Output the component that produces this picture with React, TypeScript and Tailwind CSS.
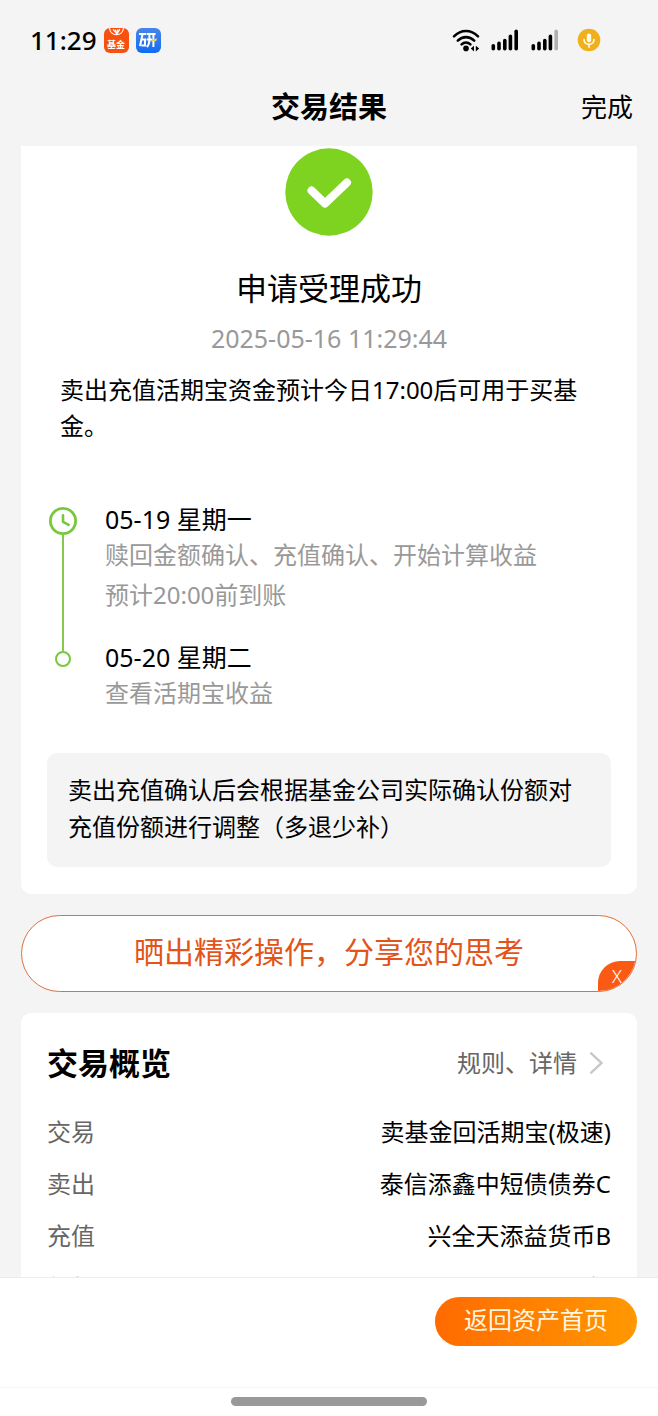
const steps = [
  {
    date: "05-19 星期一",
    lines: ["赎回金额确认、充值确认、开始计算收益", "预计20:00前到账"],
  },
  {
    date: "05-20 星期二",
    lines: ["查看活期宝收益"],
  },
];

const overview = [
  { label: "交易", value: "卖基金回活期宝(极速)" },
  { label: "卖出", value: "泰信添鑫中短债债券C" },
  { label: "充值", value: "兴全天添益货币B" },
  { label: "份额", value: "份" },
];

const WifiIcon = () => (
  <svg width="28" height="24" viewBox="0 0 28 24" fill="none" stroke="#000" strokeWidth="2.6" strokeLinecap="round">
    <path d="M2 8.4C9.2 1.2 18.8 1.2 26 8.4" />
    <path d="M5.8 12.6C10.6 8 17.4 8 22.2 12.6" />
    <path d="M9.6 16.4C12.2 13.9 15.8 13.9 18.4 16.4" />
    <circle cx="14" cy="20.4" r="2.8" fill="#000" stroke="none" />
    <path d="M22 17.8v5.6l-3.2-2.8zM23.8 17.8v5.6l3.4-2.8z" fill="#000" stroke="none" />
  </svg>
);

const SignalIcon = ({ weak = false }: { weak?: boolean }) => (
  <svg width="28" height="22" viewBox="0 0 28 22">
    <rect x="0.5" y="15" width="3.6" height="6.5" rx="1.8" />
    <rect x="6.2" y="12.6" width="3.6" height="8.9" rx="1.8" />
    <rect x="12" y="9.8" width="3.6" height="11.7" rx="1.8" />
    <rect x="17.6" y="5.6" width="3.6" height="15.9" rx="1.8" />
    <rect x="23.4" y="0.5" width="3.6" height="21" rx="1.8" fill={weak ? "#b0b0b0" : "#000"} />
  </svg>
);

const MicIcon = () => (
  <svg width="24" height="24" viewBox="0 0 24 24" fill="none">
    <circle cx="12" cy="12" r="11.3" fill="#f0b01e" />
    <rect x="9.8" y="5.4" width="4.4" height="8.8" rx="2.2" fill="#fffbe8" />
    <path d="M7 11.6c0 6.4 10 6.4 10 0M12 16.4v2.6" stroke="#fffbe8" strokeWidth="1.7" strokeLinecap="round" />
  </svg>
);

const StatusBar = () => (
  <div className="flex h-20 items-center justify-between pl-[30px] pr-[57px]">
    <div className="flex items-center">
      <span className="text-[26px] leading-8 font-medium">11:29</span>
      <span className="ml-[7px] flex size-[25px] flex-col items-center overflow-hidden rounded-md bg-[#f8500f] text-white">
        <svg width="17" height="11" viewBox="0 0 17 11" fill="none" stroke="#fff">
          <path d="M1.5 0C2.2 8.8 14.8 8.8 15.5 0" strokeWidth="1.2" />
          <path d="M5 1.4L8 4.6 7.4 1.6M12 1.2L9 5.6 9.6 1.4" strokeWidth="1.3" />
        </svg>
        <span className="text-[9px] leading-[11px] font-bold">基金</span>
      </span>
      <span className="ml-[7px] flex size-[25px] items-center justify-center rounded-md bg-linear-to-b from-[#4585ea] to-[#0c6cf2]">
        <svg width="21" height="17" viewBox="0 0 21 17" fill="none" stroke="#fff" strokeWidth="2">
          <path d="M1 2h7M4.6 2L2 14M3.4 7.6H7v6H3.4M8.6 2h9M8.6 7.6H14M11.4 2v6c0 3-1 5.4-2.6 7M15.4 2v13" />
          <path d="M10 9.4l9.4-3.2-1.4 3z" fill="#f5cf50" stroke="none" />
        </svg>
      </span>
    </div>
    <div className="flex items-center">
      <WifiIcon />
      <span className="ml-[11px]">
        <SignalIcon />
      </span>
      <span className="ml-3">
        <SignalIcon weak />
      </span>
      <span className="ml-[18px]">
        <MicIcon />
      </span>
    </div>
  </div>
);

const Timeline = () => (
  <ol className="mt-[59px]">
    {steps.map((step, index) => (
      <li key={step.date} className="flex">
        <div className="flex w-8 flex-col items-center">
          {index === 0 ? (
            <>
              <svg className="mt-1 shrink-0" width="28" height="28" viewBox="0 0 28 28" fill="none" stroke="#78c83c">
                <circle cx="14" cy="14" r="12.6" strokeWidth="2.8" />
                <path d="M14 8.4v6.4l5.6 3" strokeWidth="2.6" strokeLinecap="round" strokeLinejoin="round" />
              </svg>
              <span className="w-[2px] flex-1 bg-[#84c84c]" />
            </>
          ) : (
            <>
              <span className="h-[10px] w-[2px] bg-[#84c84c]" />
              <span className="size-4 rounded-full border-2 border-[#78c83c]" />
            </>
          )}
        </div>
        <div className={index === 0 ? "ml-[26px] pb-[26px]" : "ml-[26px]"}>
          <h3 className="text-[25px] leading-8">{step.date}</h3>
          {step.lines.map((line) => (
            <p key={line} className="text-2xl leading-10 text-[#999]">
              {line}
            </p>
          ))}
        </div>
      </li>
    ))}
  </ol>
);

const App = () => {
  return (
    <div className="flex h-screen flex-col bg-[#f4f4f4] font-['Noto_Sans','Noto_Sans_CJK_SC',sans-serif] text-black">
      <header>
        <StatusBar />
        <div className="grid h-[66px] grid-cols-[1fr_auto_1fr] items-start px-[25px] pt-[7px]">
          <h1 className="col-start-2 text-[29px] leading-10 font-bold">交易结果</h1>
          <button className="justify-self-end text-[26px] leading-10">完成</button>
        </div>
      </header>

      <main className="min-h-0 flex-1 overflow-y-auto px-[21px] [scrollbar-width:none]">
        <section className="rounded-b-[10px] bg-white px-[26px] pb-[27px] pt-[2px]">
          <svg className="mx-auto block" width="88" height="88" viewBox="0 0 88 88" fill="none">
            <circle cx="44" cy="44" r="43.7" fill="#7ed321" />
            <path d="M26.5 42.5L40 55.5 62 34.5" stroke="#fff" strokeWidth="8" strokeLinecap="round" strokeLinejoin="round" />
          </svg>
          <h2 className="mt-8 text-center text-[31px] leading-10">申请受理成功</h2>
          <p className="mt-3 text-center text-[25px] leading-9 text-[#999]">2025-05-16 11:29:44</p>
          <p className="mt-4 px-[13px] text-2xl leading-9">卖出充值活期宝资金预计今日17:00后可用于买基金。</p>

          <Timeline />

          <p className="mt-10 rounded-[10px] bg-[#f4f4f4] px-[21px] pb-[22px] pt-[18px] text-2xl leading-[37px]">
            卖出充值确认后会根据基金公司实际确认份额对充值份额进行调整（多退少补）
          </p>
        </section>

        <div className="relative mt-[21px] overflow-hidden rounded-full border border-[#e0703c] bg-white">
          <button className="h-[75px] w-full pb-1 text-[30px] leading-10 text-[#e2541a]">晒出精彩操作，分享您的思考</button>
          <button
            aria-label="关闭"
            className="absolute bottom-0 right-0 h-[30px] w-[38px] rounded-tl-[22px] bg-[#fb5a14] text-lg leading-7 font-light text-white"
          >
            X
          </button>
        </div>

        <section className="mt-[21px] rounded-[10px] bg-white px-[26px] pt-[30px]">
          <div className="flex items-center justify-between">
            <h2 className="text-[31px] leading-10 font-bold">交易概览</h2>
            <a href="#detail" className="flex items-center gap-3 pr-2 text-2xl leading-10 text-[#666]">
              规则、详情
              <svg width="14" height="24" viewBox="0 0 14 24" fill="none" stroke="#c8c8c8" strokeWidth="2.4">
                <path d="M1.4 1.6L12.4 12 1.4 22.4" />
              </svg>
            </a>
          </div>
          <dl className="mt-[23px] text-2xl leading-[52px]">
            {overview.map((item) => (
              <div key={item.label} className="flex justify-between">
                <dt className="text-[#666]">{item.label}</dt>
                <dd>{item.value}</dd>
              </div>
            ))}
          </dl>
        </section>
      </main>

      <footer className="border-t border-[#ececec] bg-white">
        <div className="flex justify-end px-[21px] pb-[41px] pt-[19px]">
          <button className="rounded-full bg-linear-to-r from-[#ff6a00] to-[#ff9800] px-[29px] pb-[3px] text-2xl leading-[46px] text-[#fff6e0]">
            返回资产首页
          </button>
        </div>
        <div className="flex h-[29px] justify-center border-t border-[#f6f6f6] pt-[9px]">
          <span className="h-[9px] w-[196px] rounded-full bg-[#999]" />
        </div>
      </footer>
    </div>
  );
};

export default App;
